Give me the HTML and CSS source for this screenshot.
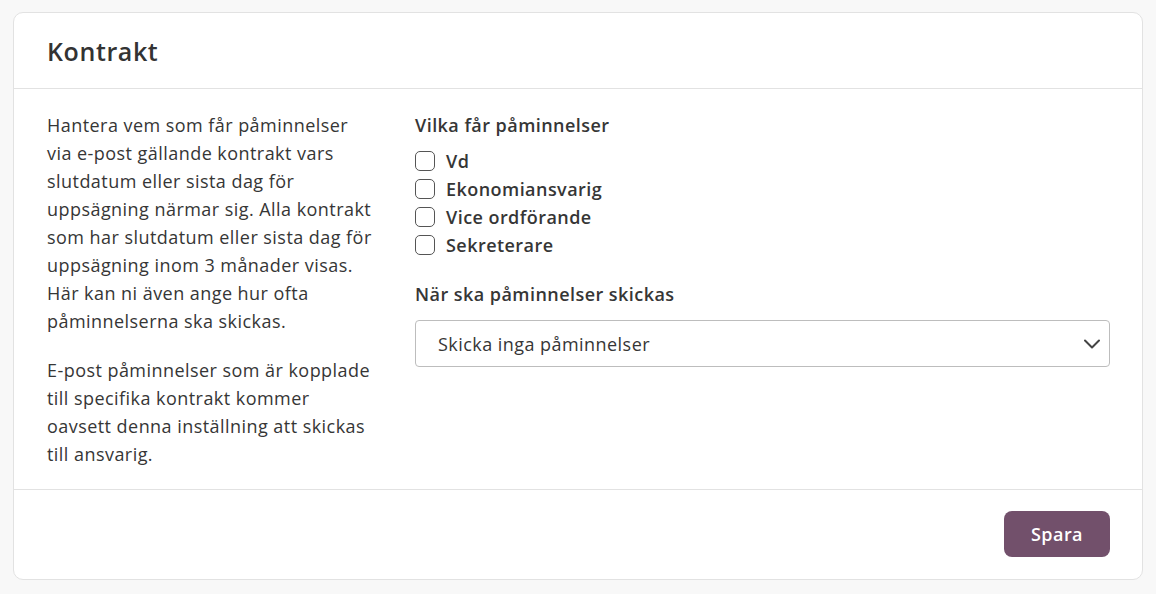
FILE: index.html
```html
<!DOCTYPE html>
<html lang="sv">
<head>
    <meta charset="UTF-8">
    <meta name="viewport" content="width=device-width, initial-scale=1.0">
    <title>Kontrakt</title>
    <link rel="stylesheet" href="styles.css">
</head>
<body>
    <div class="card">
        <div class="card-header">
            <h2>Kontrakt</h2>
        </div>

        <div class="card-body">
            <div class="intro">
                <p>Hantera vem som får påminnelser via e-post gällande kontrakt vars slutdatum eller sista dag för uppsägning närmar sig. Alla kontrakt som har slutdatum eller sista dag för uppsägning inom 3 månader visas. Här kan ni även ange hur ofta påminnelserna ska skickas.</p>
                <p>E-post påminnelser som är kopplade till specifika kontrakt kommer oavsett denna inställning att skickas till ansvarig.</p>
            </div>

            <div class="settings">
                <div class="field">
                    <div class="field-label">Vilka får påminnelser</div>
                    <label class="check"><input type="checkbox"> Vd</label>
                    <label class="check"><input type="checkbox"> Ekonomiansvarig</label>
                    <label class="check"><input type="checkbox"> Vice ordförande</label>
                    <label class="check"><input type="checkbox"> Sekreterare</label>
                </div>

                <div class="field">
                    <div class="field-label">När ska påminnelser skickas</div>
                    <div class="select">
                        <span>Skicka inga påminnelser</span>
                        <svg width="16" height="10" viewBox="0 0 16 10" fill="none">
                            <path d="M1 1.5 L8 8.5 L15 1.5" stroke="#444" stroke-width="2" stroke-linecap="round" stroke-linejoin="round"/>
                        </svg>
                    </div>
                </div>
            </div>
        </div>

        <div class="card-footer">
            <button class="btn-primary">Spara</button>
        </div>
    </div>
</body>
</html>
```

FILE: styles.css
```css
body {
    font-family: "Open Sans", "Noto Sans", sans-serif;
    margin: 0;
    padding: 12px 13px;
    background-color: #f8f8f8;
    color: #363636;
    letter-spacing: 0.45px;
}
.card {
    background: #fff;
    border: 1px solid #e2e2e2;
    border-radius: 10px;
}
.card-header {
    height: 75px;
    padding: 0 33px;
    display: flex;
    align-items: center;
    border-bottom: 1px solid #e2e2e2;
}
.card-header h2 {
    margin: 0;
    font-size: 25px;
    font-weight: 600;
    letter-spacing: 0.6px;
    color: #333;
}
.card-body {
    display: grid;
    grid-template-columns: 336px 1fr;
    gap: 32px;
    padding: 22px 32px 21px 33px;
    border-bottom: 1px solid #e2e2e2;
}
.intro {
    max-width: 330px;
}
.intro p {
    margin: 0 0 21px;
    font-size: 18px;
    line-height: 28px;
}
.intro p:last-child {
    margin-bottom: 0;
}
.field {
    margin-bottom: 21px;
}
.field-label {
    font-size: 18px;
    font-weight: 600;
    line-height: 28px;
    margin-bottom: 8px;
}
.check {
    display: flex;
    align-items: center;
    gap: 11px;
    height: 28px;
    font-size: 18px;
    font-weight: 600;
}
.check input {
    appearance: none;
    margin: 0;
    width: 20px;
    height: 20px;
    border: 1.5px solid #555;
    border-radius: 5px;
    background: #fff;
}
.select {
    display: flex;
    align-items: center;
    justify-content: space-between;
    height: 47px;
    box-sizing: border-box;
    margin-top: 12px;
    padding: 0 9px 0 22px;
    border: 1px solid #bdbdbd;
    border-radius: 4px;
    font-size: 18px;
}
.card-footer {
    display: flex;
    justify-content: flex-end;
    padding: 21px 32px 22px;
}
.btn-primary {
    width: 106px;
    height: 46px;
    background-color: #72506b;
    color: #fff;
    border: none;
    border-radius: 8px;
    font-family: inherit;
    font-size: 18px;
    font-weight: 600;
    letter-spacing: inherit;
    cursor: pointer;
}
.btn-primary:hover {
    background-color: #5e4158;
}
```
